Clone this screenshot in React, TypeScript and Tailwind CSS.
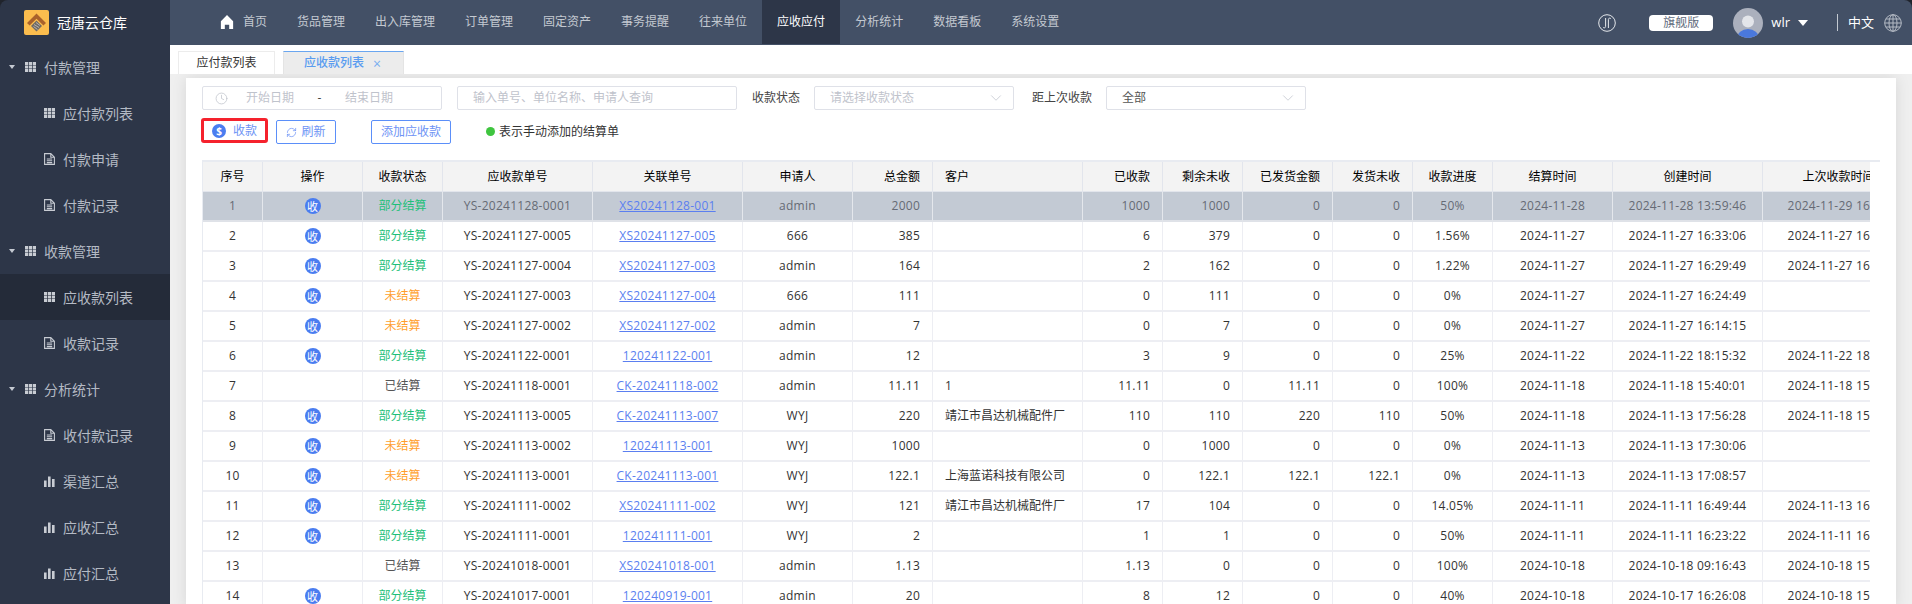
import React from 'react';
import {ChevronDown, Clock, RefreshCw} from 'lucide-react';

type Row = {
  status: string;
  no: string;
  link: string;
  user: string;
  total: string;
  customer?: string;
  received: string;
  left: string;
  shipped: string;
  shippedLeft: string;
  progress: string;
  settle: string;
  created: string;
  last?: string;
};

const PART = '部分结算';
const NONE = '未结算';
const DONE = '已结算';

const rows: Row[] = [
  {status: PART, no: 'YS-20241128-0001', link: 'XS20241128-001', user: 'admin', total: '2000', received: '1000', left: '1000', shipped: '0', shippedLeft: '0', progress: '50%', settle: '2024-11-28', created: '2024-11-28 13:59:46', last: '2024-11-29 16:20:11'},
  {status: PART, no: 'YS-20241127-0005', link: 'XS20241127-005', user: '666', total: '385', received: '6', left: '379', shipped: '0', shippedLeft: '0', progress: '1.56%', settle: '2024-11-27', created: '2024-11-27 16:33:06', last: '2024-11-27 16:40:12'},
  {status: PART, no: 'YS-20241127-0004', link: 'XS20241127-003', user: 'admin', total: '164', received: '2', left: '162', shipped: '0', shippedLeft: '0', progress: '1.22%', settle: '2024-11-27', created: '2024-11-27 16:29:49', last: '2024-11-27 16:35:02'},
  {status: NONE, no: 'YS-20241127-0003', link: 'XS20241127-004', user: '666', total: '111', received: '0', left: '111', shipped: '0', shippedLeft: '0', progress: '0%', settle: '2024-11-27', created: '2024-11-27 16:24:49'},
  {status: NONE, no: 'YS-20241127-0002', link: 'XS20241127-002', user: 'admin', total: '7', received: '0', left: '7', shipped: '0', shippedLeft: '0', progress: '0%', settle: '2024-11-27', created: '2024-11-27 16:14:15'},
  {status: PART, no: 'YS-20241122-0001', link: '120241122-001', user: 'admin', total: '12', received: '3', left: '9', shipped: '0', shippedLeft: '0', progress: '25%', settle: '2024-11-22', created: '2024-11-22 18:15:32', last: '2024-11-22 18:20:40'},
  {status: DONE, no: 'YS-20241118-0001', link: 'CK-20241118-002', user: 'admin', total: '11.11', customer: '1', received: '11.11', left: '0', shipped: '11.11', shippedLeft: '0', progress: '100%', settle: '2024-11-18', created: '2024-11-18 15:40:01', last: '2024-11-18 15:42:10'},
  {status: PART, no: 'YS-20241113-0005', link: 'CK-20241113-007', user: 'WYJ', total: '220', customer: '靖江市昌达机械配件厂', received: '110', left: '110', shipped: '220', shippedLeft: '110', progress: '50%', settle: '2024-11-18', created: '2024-11-13 17:56:28', last: '2024-11-18 15:30:21'},
  {status: NONE, no: 'YS-20241113-0002', link: '120241113-001', user: 'WYJ', total: '1000', received: '0', left: '1000', shipped: '0', shippedLeft: '0', progress: '0%', settle: '2024-11-13', created: '2024-11-13 17:30:06'},
  {status: NONE, no: 'YS-20241113-0001', link: 'CK-20241113-001', user: 'WYJ', total: '122.1', customer: '上海蓝诺科技有限公司', received: '0', left: '122.1', shipped: '122.1', shippedLeft: '122.1', progress: '0%', settle: '2024-11-13', created: '2024-11-13 17:08:57'},
  {status: PART, no: 'YS-20241111-0002', link: 'XS20241111-002', user: 'WYJ', total: '121', customer: '靖江市昌达机械配件厂', received: '17', left: '104', shipped: '0', shippedLeft: '0', progress: '14.05%', settle: '2024-11-11', created: '2024-11-11 16:49:44', last: '2024-11-13 16:10:33'},
  {status: PART, no: 'YS-20241111-0001', link: '120241111-001', user: 'WYJ', total: '2', received: '1', left: '1', shipped: '0', shippedLeft: '0', progress: '50%', settle: '2024-11-11', created: '2024-11-11 16:23:22', last: '2024-11-11 16:30:05'},
  {status: DONE, no: 'YS-20241018-0001', link: 'XS20241018-001', user: 'admin', total: '1.13', received: '1.13', left: '0', shipped: '0', shippedLeft: '0', progress: '100%', settle: '2024-10-18', created: '2024-10-18 09:16:43', last: '2024-10-18 15:12:09'},
  {status: PART, no: 'YS-20241017-0001', link: '120240919-001', user: 'admin', total: '20', received: '8', left: '12', shipped: '0', shippedLeft: '0', progress: '40%', settle: '2024-10-18', created: '2024-10-17 16:26:08', last: '2024-10-18 15:12:40'},
];

const navItems = ['货品管理', '出入库管理', '订单管理', '固定资产', '事务提醒', '往来单位', '应收应付', '分析统计', '数据看板', '系统设置'];

const columnWidths = [60, 100, 80, 150, 150, 110, 80, 150, 80, 80, 90, 80, 80, 120, 150, 168];

function GridIcon({className}: {className?: string}) {
  return (
    <svg viewBox="0 0 11 10" className={className} fill="currentColor">
      {[0, 3.5, 7].map((y) =>
        [0, 3.9, 7.8].map((x) => <rect key={`${x}-${y}`} x={x} y={y} width="3.2" height="3" />),
      )}
    </svg>
  );
}

function DocIcon({className}: {className?: string}) {
  return (
    <svg viewBox="0 0 11 12" className={className} fill="none" stroke="currentColor" strokeWidth="1.1">
      <path d="M.6.6h6.2l3.6 3.6v7.2H.6zM6.8.6v3.6h3.6M2.8 6h5.4M2.8 7.8h5.4M2.8 9.6h5.4" />
    </svg>
  );
}

function BarsIcon({className}: {className?: string}) {
  return (
    <svg viewBox="0 0 11 11" className={className} fill="currentColor">
      <rect x="0" y="4.5" width="2.6" height="6.5" />
      <rect x="4" y="0.5" width="2.6" height="10.5" />
      <rect x="8" y="3" width="2.6" height="8" />
    </svg>
  );
}

function Logo() {
  return (
    <svg viewBox="0 0 25 25" className="h-[25px] w-[25px]">
      <rect width="25" height="25" rx="2" fill="#fbbd4e" />
      <path d="M12.5 3.5 22 13l-2.6 2.6-6.9-6.9-6.9 6.9L3 13z" fill="#a9622b" />
      <path d="M12.5 10.5 18 16l-5.5 5.5L7 16z" fill="#6f6a66" />
      <path d="M10 14.5l5 3M9.5 16.5l4 3M12 12.5l4 3" stroke="#d8d4cf" strokeWidth="0.7" />
    </svg>
  );
}

function SideGroup({label}: {label: string}) {
  return (
    <div className="flex h-[46px] items-center pl-[9px] text-[14px] text-[#b4bac4]">
      <span className="mr-[10px] h-0 w-0 border-x-[3.5px] border-t-[4px] border-x-transparent border-t-[#c5cad2]" />
      <GridIcon className="mr-[8px] h-[10px] w-[11px] text-[#c8ccd3]" />
      {label}
    </div>
  );
}

function SideItem({label, icon, active}: {label: string; icon: 'grid' | 'doc' | 'bars'; active?: boolean}) {
  const cls = 'mr-[8px] w-[11px] text-[#c8ccd3]';
  return (
    <div className={`flex h-[46px] items-center pl-[44px] text-[14px] text-[#b4bac4] ${active ? 'bg-[#242b39]' : ''}`}>
      {icon === 'grid' && <GridIcon className={`${cls} h-[10px]`} />}
      {icon === 'doc' && <DocIcon className={`${cls} h-[12px]`} />}
      {icon === 'bars' && <BarsIcon className={`${cls} h-[11px]`} />}
      {label}
    </div>
  );
}

function Sidebar() {
  return (
    <aside className="h-full w-[170px] shrink-0 overflow-hidden rounded-tl-lg bg-[#2d3648]">
      <div className="flex h-[44px] items-center pl-[24px]">
        <Logo />
        <span className="ml-[8px] text-[14px] text-white">冠唐云仓库</span>
      </div>
      <SideGroup label="付款管理" />
      <SideItem label="应付款列表" icon="grid" />
      <SideItem label="付款申请" icon="doc" />
      <SideItem label="付款记录" icon="doc" />
      <SideGroup label="收款管理" />
      <SideItem label="应收款列表" icon="grid" active />
      <SideItem label="收款记录" icon="doc" />
      <SideGroup label="分析统计" />
      <SideItem label="收付款记录" icon="doc" />
      <SideItem label="渠道汇总" icon="bars" />
      <SideItem label="应收汇总" icon="bars" />
      <SideItem label="应付汇总" icon="bars" />
    </aside>
  );
}

function TopBar() {
  return (
    <header className="flex h-[45px] items-start rounded-tr-lg bg-[#435066] pl-[35px] text-[12px] text-[#c3c9d1]">
      <div className="flex h-[44px] items-center px-[15px]">
        <svg viewBox="0 0 14 16" className="mr-[9px] h-[14px] w-[14px] text-white" fill="currentColor">
          <path d="M7 0 14 7v9H9.5v-5h-5v5H0V7z" />
        </svg>
        首页
      </div>
      {navItems.map((item) => (
        <div
          key={item}
          className={`flex h-[44px] items-center px-[15px] ${item === '应收应付' ? 'bg-[#2d3648] text-white' : ''}`}
        >
          {item}
        </div>
      ))}
      <div className="ml-auto flex h-[45px] items-center">
        <svg viewBox="0 0 18 18" className="h-[18px] w-[18px] text-[#e4e7eb]" fill="none" stroke="currentColor" strokeWidth="1">
          <circle cx="9" cy="9" r="8.3" />
          <path d="M7.6 4v8.5c0 1.4-1.4 1.7-2.4 1M10.4 14V5.5c0-1.4 1.4-1.7 2.4-1" />
        </svg>
        <span className="ml-[33px] flex h-[16px] w-[64px] items-center justify-center rounded-[4px] bg-white text-[12px] text-[#5f6b7c]">
          旗舰版
        </span>
        <svg viewBox="0 0 30 30" className="ml-[20px] h-[30px] w-[30px]">
          <clipPath id="avatar">
            <circle cx="15" cy="15" r="15" />
          </clipPath>
          <g clipPath="url(#avatar)">
            <rect width="30" height="30" fill="#abb0bd" />
            <circle cx="15" cy="13.5" r="6" fill="#e3e5ea" />
            <ellipse cx="15" cy="30" rx="11" ry="9" fill="#4a78dc" />
          </g>
        </svg>
        <span className="ml-[8px] text-[13px] font-medium text-white">wlr</span>
        <span className="ml-[8px] h-0 w-0 border-x-[5px] border-t-[6px] border-x-transparent border-t-white" />
        <span className="ml-[29px] h-[17px] w-px bg-[#c3c9d1]" />
        <span className="ml-[10px] text-[13px] text-white">中文</span>
        <svg viewBox="0 0 18 18" className="mx-[10px] h-[18px] w-[18px] text-[#b4bac4]" fill="none" stroke="currentColor" strokeWidth="1">
          <circle cx="9" cy="9" r="8.3" />
          <ellipse cx="9" cy="9" rx="4" ry="8.3" />
          <path d="M9 .7v16.6M.7 9h16.6M1.8 5h14.4M1.8 13h14.4" />
        </svg>
      </div>
    </header>
  );
}

function TabStrip() {
  return (
    <div className="flex h-[29px] items-end bg-white pl-[8px] text-[12px]">
      <div className="flex h-[23px] w-[97px] items-center justify-center border-x border-t border-[#ececec] bg-white text-[#333]">
        应付款列表
      </div>
      <div className="ml-[8px] flex h-[23px] w-[121px] items-center border-x border-t border-x-[#e4e4e4] border-t-[#6aa6f0] bg-[#ececec] pl-[20px] font-medium text-[#5a9cf0]">
        应收款列表
        <span className="ml-[9px] text-[14px] font-normal text-[#7aaef0]">×</span>
      </div>
    </div>
  );
}

function Filters() {
  const box = 'flex h-[24px] items-center whitespace-nowrap rounded-[2px] border border-[#dfe1e8] bg-white';
  return (
    <div className="flex h-[24px] items-center text-[12px]">
      <div className={`${box} w-[240px] pl-[12px] text-[#bfc3cc]`}>
        <Clock className="mr-[18px] h-[13px] w-[13px]" strokeWidth={1.4} />
        <span className="w-[48px]">开始日期</span>
        <span className="w-[51px] text-center text-[#444]">-</span>
        <span>结束日期</span>
      </div>
      <div className={`${box} ml-[15px] w-[280px] pl-[15px] text-[#bfc3cc]`}>输入单号、单位名称、申请人查询</div>
      <span className="ml-[15px] text-[#444]">收款状态</span>
      <div className={`${box} ml-[14px] w-[200px] justify-between pl-[15px] pr-[8px] text-[#bfc3cc]`}>
        请选择收款状态
        <ChevronDown className="h-[18px] w-[18px]" strokeWidth={1} />
      </div>
      <span className="ml-[18px] text-[#444]">距上次收款</span>
      <div className={`${box} ml-[14px] w-[200px] justify-between pl-[15px] pr-[8px] text-[#555]`}>
        全部
        <ChevronDown className="h-[18px] w-[18px] text-[#bfc3cc]" strokeWidth={1} />
      </div>
    </div>
  );
}

function Actions() {
  const btn = 'flex h-[24px] items-center justify-center rounded-[2px] border border-[#5b8ff9] text-[#6d93f5]';
  return (
    <div className="mt-[8px] flex h-[26px] items-end text-[12px]">
      <button className="-ml-[1px] mb-[1px] flex h-[25px] w-[67px] items-center rounded-[3px] border-[3px] border-[#f5222d] pl-[8px] text-[#6d93f5]">
        <span className="mr-[7px] flex h-[14px] w-[14px] items-center justify-center rounded-full bg-[#4a7df0] text-[10px] font-bold leading-none text-white">$</span>
        收款
      </button>
      <button className={`${btn} ml-[8px] w-[60px]`}>
        <RefreshCw className="mr-[4px] h-[11px] w-[11px]" strokeWidth={1.6} />
        刷新
      </button>
      <button className={`${btn} ml-[35px] w-[80px]`}>添加应收款</button>
      <span className="mb-[8px] ml-[35px] h-[9px] w-[9px] rounded-full bg-[#3fc53f]" />
      <span className="mb-[3px] ml-[4px] text-[#333]">表示手动添加的结算单</span>
    </div>
  );
}

const th = 'h-[30px] border-r border-b border-[#e2e5ec] bg-[#f3f3f3] px-[12px] font-normal text-black whitespace-nowrap overflow-hidden';
const td = 'h-[30px] border-r border-b-2 border-[#edeef3] px-[12px] whitespace-nowrap overflow-hidden tracking-[0.25px]';

function DataTable() {
  return (
    <div className="mt-[16px]">
      <div className="h-[2px] w-[1678px] bg-[#e8ebf1]" />
      <div className="w-[1668px] overflow-hidden">
        <table className="w-[1728px] table-fixed border-separate border-spacing-0 border-l border-[#e8ebf1] text-[12px]">
          <colgroup>
            {columnWidths.map((w, i) => (
              <col key={i} style={{width: w}} />
            ))}
          </colgroup>
          <thead>
            <tr>
              <th className={th}>序号</th>
              <th className={th}>操作</th>
              <th className={th}>收款状态</th>
              <th className={th}>应收款单号</th>
              <th className={th}>关联单号</th>
              <th className={th}>申请人</th>
              <th className={`${th} text-right`}>总金额</th>
              <th className={`${th} text-left`}>客户</th>
              <th className={`${th} text-right`}>已收款</th>
              <th className={`${th} text-right`}>剩余未收</th>
              <th className={`${th} text-right`}>已发货金额</th>
              <th className={`${th} text-right`}>发货未收</th>
              <th className={th}>收款进度</th>
              <th className={th}>结算时间</th>
              <th className={th}>创建时间</th>
              <th className={`${th} pr-[28px]`}>上次收款时间</th>
            </tr>
          </thead>
          <tbody>
            {rows.map((row, i) => {
              const selected = i === 0;
              const cell = `${td} ${selected ? 'border-r-[#e4e7ec] border-b-[#dfe2e8] bg-[#c3cad4] text-[#666a75]' : 'text-[#333]'}`;
              const statusColor = row.status === PART ? 'text-[#1fbf7a]' : row.status === NONE ? 'text-[#ff9f2e]' : 'text-[#555]';
              return (
                <tr key={row.no}>
                  <td className={`${cell} text-center`}>{i + 1}</td>
                  <td className={cell}>
                    {row.status !== DONE && (
                      <span className="mx-auto flex h-[16px] w-[16px] items-center justify-center rounded-full bg-[#4a7df0] text-[11px] leading-none tracking-normal text-white">
                        收
                      </span>
                    )}
                  </td>
                  <td className={`${cell} text-center`}>
                    <span className={`tracking-normal ${statusColor}`}>{row.status}</span>
                  </td>
                  <td className={`${cell} text-center`}>{row.no}</td>
                  <td className={`${cell} text-center`}>
                    <a className="text-[#5b7ff0] underline">{row.link}</a>
                  </td>
                  <td className={`${cell} text-center`}>{row.user}</td>
                  <td className={`${cell} text-right`}>{row.total}</td>
                  <td className={`${cell} text-left`}>
                    <span className="tracking-normal">{row.customer}</span>
                  </td>
                  <td className={`${cell} text-right`}>{row.received}</td>
                  <td className={`${cell} text-right`}>{row.left}</td>
                  <td className={`${cell} text-right`}>{row.shipped}</td>
                  <td className={`${cell} text-right`}>{row.shippedLeft}</td>
                  <td className={`${cell} text-center`}>{row.progress}</td>
                  <td className={`${cell} text-center`}>{row.settle}</td>
                  <td className={`${cell} text-center`}>{row.created}</td>
                  <td className={`${cell} text-center`}>{row.last}</td>
                </tr>
              );
            })}
          </tbody>
        </table>
      </div>
    </div>
  );
}

export default function App() {
  return (
    <div
      className="flex h-[604px] w-[1912px] overflow-hidden bg-[#20242c]"
      style={{fontFamily: '"Open Sans", "Noto Sans CJK SC", sans-serif'}}
    >
      <Sidebar />
      <main className="flex h-full min-w-0 flex-1 flex-col">
        <TopBar />
        <TabStrip />
        <div className="min-h-0 flex-1 overflow-hidden bg-[#efefef] px-[16px] pt-[4px]">
          <div className="h-[530px] overflow-hidden bg-white px-[16px] pt-[8px] shadow-[0_0_14px_rgba(0,0,0,0.1)]">
            <Filters />
            <Actions />
            <DataTable />
          </div>
        </div>
      </main>
    </div>
  );
}
